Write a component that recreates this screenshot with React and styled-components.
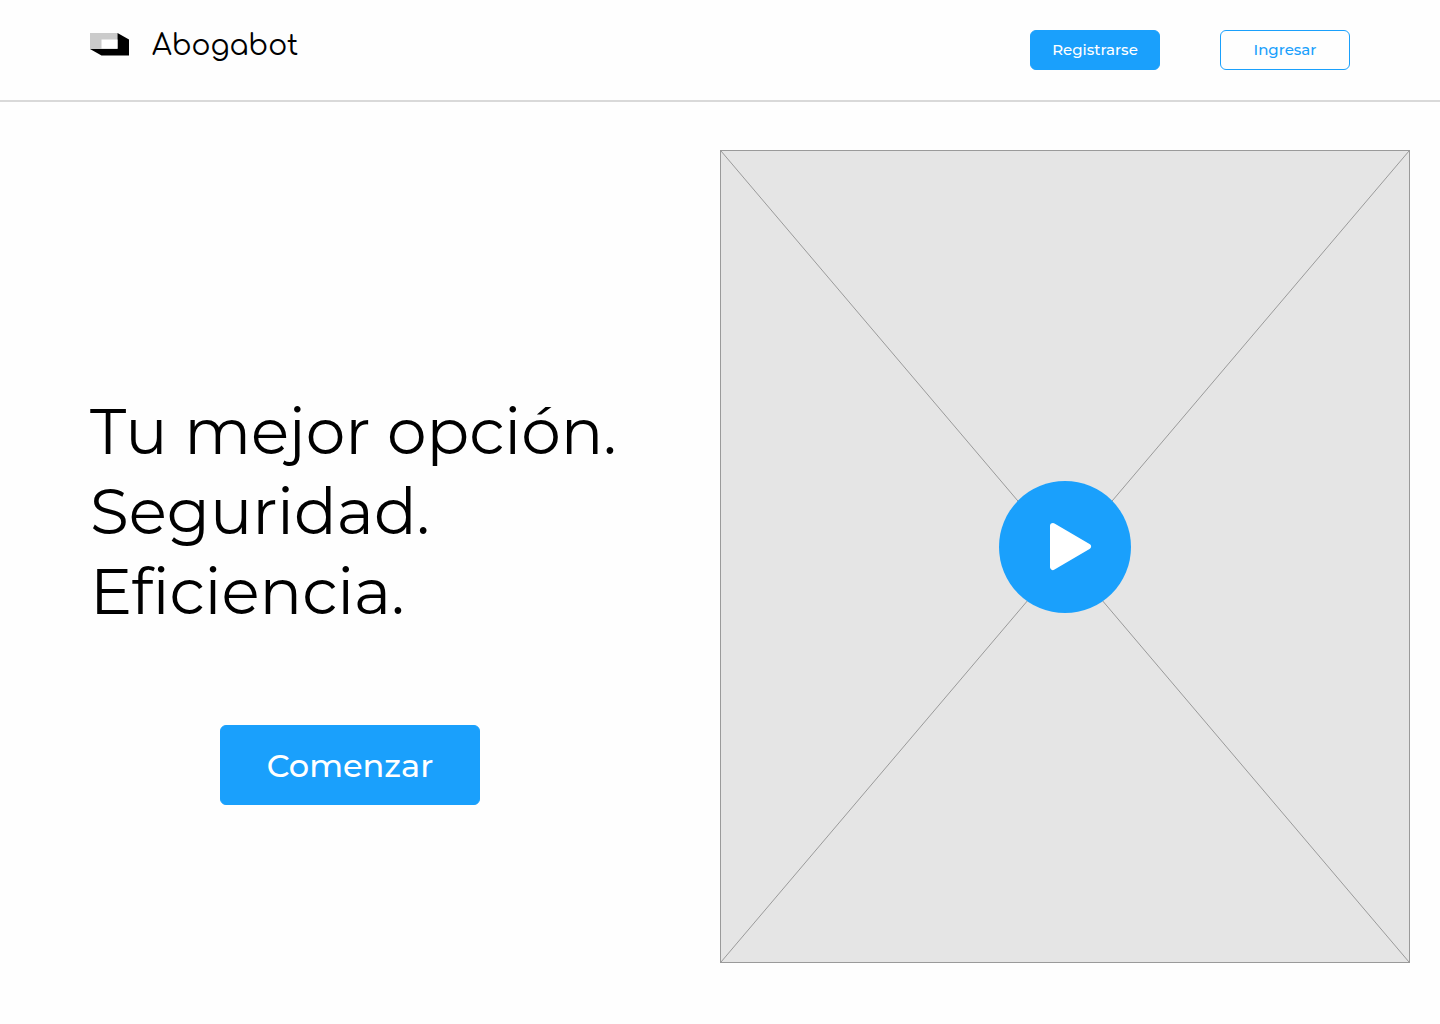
import React from "react";
import styled, { createGlobalStyle } from "styled-components";

const BLUE = "#1aa0fc";

const GlobalStyle = createGlobalStyle`
  *, *::before, *::after { box-sizing: border-box; }
  body {
    margin: 0;
    background: #fefefe;
    color: #000;
    font-family: Montserrat, Inter, "Open Sans", sans-serif;
  }
`;

const Header = styled.header`
  display: flex;
  align-items: flex-start;
  justify-content: space-between;
  padding: 30px 90px;
  border-bottom: 2px solid #d9d9d9;
`;

const Brand = styled.a`
  display: flex;
  align-items: flex-start;
  gap: 23px;
  color: inherit;
  text-decoration: none;
  font-family: Comfortaa, Quicksand, Inter, sans-serif;
  font-size: 28px;
  font-weight: 400;
  line-height: 32px;

  svg { margin-top: 3px; }
`;

const Nav = styled.nav`
  display: flex;
  gap: 60px;
`;

const Button = styled.button`
  width: ${(p) => (p.$large ? "260px" : "130px")};
  height: ${(p) => (p.$large ? "80px" : "40px")};
  padding: 0;
  border: 1px solid ${BLUE};
  border-radius: 6px;
  background: ${(p) => (p.$outline ? "#fefefe" : BLUE)};
  color: ${(p) => (p.$outline ? BLUE : "#fff")};
  font-family: inherit;
  font-size: ${(p) => (p.$large ? "32px" : "15px")};
  font-weight: 500;
  line-height: ${(p) => (p.$large ? "39px" : "18px")};
  cursor: pointer;
`;

const Hero = styled.main`
  display: grid;
  grid-template-columns: 1fr 1fr;
  align-items: center;
  padding: 48px 0;
`;

const Copy = styled.section`
  display: flex;
  flex-direction: column;
  align-items: flex-start;
  padding: 84px 20px 0 90px;
`;

const Pitch = styled.div`
  display: flex;
  flex-direction: column;
  align-items: center;
  gap: 93px;
  width: 100%;
  max-width: 520px;
`;

const Title = styled.h1`
  align-self: stretch;
  margin: 0;
  font-size: 63px;
  font-weight: 400;
  line-height: 80px;
`;

const Line = styled.span`
  display: block;
  white-space: nowrap;
`;

const Media = styled.section`
  position: relative;
  margin-right: 30px;
  aspect-ratio: 690 / 813;
  border: 1px solid #9a9a9a;
  background: #e5e5e5;
`;

const Cross = styled.svg`
  display: block;
  width: 100%;
  height: 100%;
`;

const Play = styled.button`
  position: absolute;
  left: 50%;
  bottom: 43%;
  width: 132px;
  height: 132px;
  margin-left: -66px;
  padding: 0;
  border: 0;
  border-radius: 50%;
  background: ${BLUE};
  cursor: pointer;

  svg { display: block; }
`;

function Logo() {
  return (
    <svg width="39" height="23" viewBox="0 0 39 23" aria-hidden="true">
      <path d="M0 0H27.5V16H0Z" fill="#cbcbcb" />
      <path d="M27.5 0L39 6.5V22.5H11.5L0 16H27.5Z" fill="#000" />
      <path d="M11.5 6.5H27.5V15.5H11.5Z" fill="#fff" />
    </svg>
  );
}

export default function App() {
  return (
    <>
      <GlobalStyle />
      <Header>
        <Brand href="#">
          <Logo />
          <span>Abogabot</span>
        </Brand>
        <Nav>
          <Button type="button">Registrarse</Button>
          <Button type="button" $outline>Ingresar</Button>
        </Nav>
      </Header>
      <Hero>
        <Copy>
          <Pitch>
            <Title>
              <Line>Tu mejor opción.</Line>
              <Line>Seguridad.</Line>
              <Line>Eficiencia.</Line>
            </Title>
            <Button type="button" $large>Comenzar</Button>
          </Pitch>
        </Copy>
        <Media>
          <Cross viewBox="0 0 688 811" preserveAspectRatio="none" aria-hidden="true">
            <path d="M0 0L688 811M688 0L0 811" stroke="#9a9a9a" fill="none" />
          </Cross>
          <Play type="button" aria-label="Reproducir">
            <svg width="132" height="132" viewBox="0 0 132 132" aria-hidden="true">
              <path d="M54 45L89 65.5L54 86Z" fill="#fff" stroke="#fff" strokeWidth="6" strokeLinejoin="round" />
            </svg>
          </Play>
        </Media>
      </Hero>
    </>
  );
}
